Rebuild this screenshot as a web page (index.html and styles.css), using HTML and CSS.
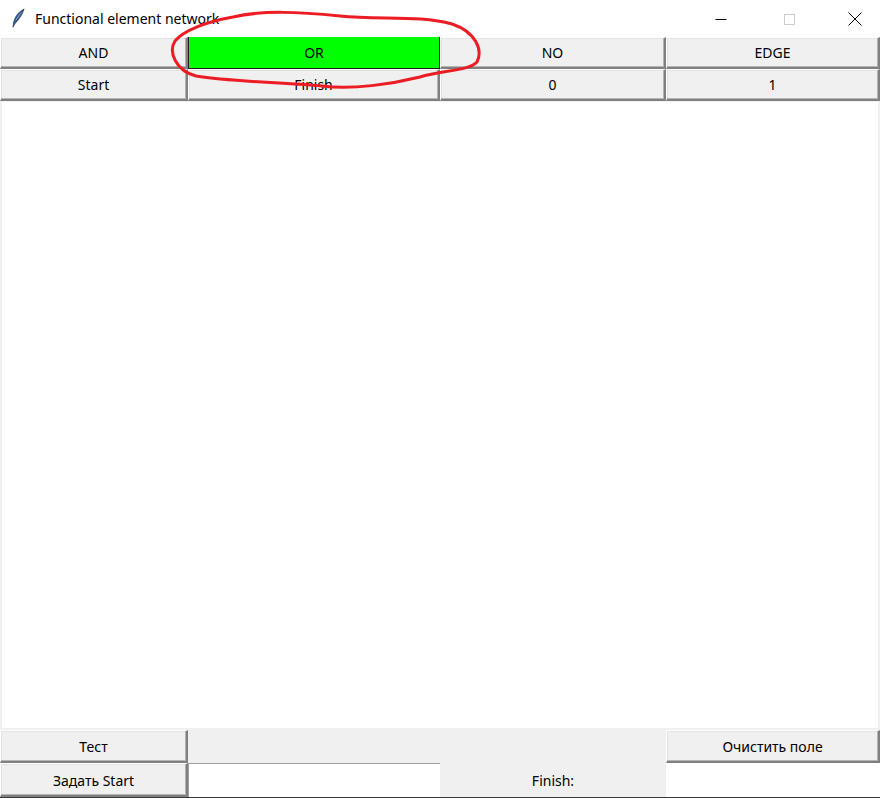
FILE: index.html
```html
<!DOCTYPE html>
<html lang="ru">
<head>
<meta charset="utf-8">
<title>Functional element network</title>
<link rel="stylesheet" href="styles.css">
</head>
<body>
<div class="window">
  <div class="titlebar">
    <div class="title-left">
      <svg class="app-icon" width="16" height="20" viewBox="0 0 16 20">
        <path d="M14.5 0.5 C 9 3, 5 8, 3.5 13 C 3 15, 2.8 17, 2.6 19.5 L 3.4 19.5 C 3.8 17.5, 4.5 16, 5.5 15 C 9 12, 13 7, 14.5 0.5 Z" fill="#3a5a8c"/>
        <path d="M13.5 2 C 10 5, 7 9, 5.2 13.5 C 8 11, 11.5 7, 13.5 2 Z" fill="#8fb0dd"/>
        <path d="M14 1 L 3 19" stroke="#1d2b44" stroke-width="0.7" fill="none"/>
      </svg>
      <span class="title-text">Functional element network</span>
    </div>
    <div class="title-controls">
      <span class="ctl ctl-min"><svg width="12" height="12" viewBox="0 0 12 12"><path d="M0.5 6.5 H 11.5" stroke="#000" stroke-width="1"/></svg></span>
      <span class="ctl ctl-max"><svg width="12" height="12" viewBox="0 0 12 12"><rect x="1.5" y="1.5" width="10" height="10" fill="none" stroke="#cccccc" stroke-width="1"/></svg></span>
      <span class="ctl ctl-close"><svg width="14" height="14" viewBox="0 0 14 14"><path d="M0.5 0.5 L 13.5 13.5 M13.5 0.5 L 0.5 13.5" stroke="#000" stroke-width="1"/></svg></span>
    </div>
  </div>

  <div class="toolbar">
    <div class="btn">AND</div>
    <div class="btn btn-active">OR</div>
    <div class="btn">NO</div>
    <div class="btn">EDGE</div>
    <div class="btn">Start</div>
    <div class="btn">Finish</div>
    <div class="btn">0</div>
    <div class="btn">1</div>
  </div>

  <div class="canvas"></div>

  <div class="bottom">
    <div class="btn">Тест</div>
    <div class="filler"></div>
    <div class="btn btn-wide">Очистить поле</div>
    <div class="btn">Задать Start</div>
    <div class="entry entry-left"></div>
    <div class="label">Finish:</div>
    <div class="entry entry-right"></div>
  </div>
  <div class="bottom-edge"></div>

  <svg class="annotation" width="880" height="100" viewBox="0 0 880 100">
    <path d="M 233 17 C 262 10, 300 12, 340 16 C 380 20, 420 15, 452 24 C 476 32, 483 50, 477 62 C 469 71, 442 70, 420 77 C 392 84, 352 90, 322 86 C 282 82, 232 82, 196 76 C 176 71, 168 52, 175 41 C 183 31, 205 22, 233 17 Z" fill="none" stroke="#ec1c24" stroke-width="3" stroke-linejoin="round" stroke-linecap="round"/>
  </svg>
</div>
</body>
</html>
```

FILE: styles.css
```css
* { box-sizing: border-box; }
html, body {
  margin: 0;
  padding: 0;
  background: #ffffff;
}
body {
  font-family: "Noto Sans", "Open Sans", "Liberation Sans", sans-serif;
  font-size: 14px;
  color: #000;
}
.window {
  position: relative;
  width: 880px;
  height: 798px;
  background: #f0f0f0;
  overflow: hidden;
}
.titlebar {
  height: 37px;
  background: #ffffff;
  display: flex;
  align-items: center;
  justify-content: space-between;
}
.title-left {
  display: flex;
  align-items: center;
  padding-left: 10px;
  gap: 9px;
}
.app-icon { display: block; margin-top: -1px; }
.title-text {
  font-size: 14px;
  color: #000;
  margin-top: -1px;
}
.title-controls {
  display: flex;
  height: 100%;
}
.ctl {
  width: 58px;
  height: 100%;
  display: flex;
  align-items: center;
  justify-content: center;
}
.ctl-min { width: 46px; margin-right: 22px; }
.ctl-max { width: 46px; margin-right: 10px; }
.ctl-close { width: 58px; }
.ctl svg { display: block; }
.ctl-min svg { margin-top: 1px; }
.ctl-close svg { margin-left: 8px; }

.toolbar {
  display: grid;
  grid-template-columns: 188px 252px 226px 214px;
  grid-template-rows: 32px 32px;
}
.btn {
  background: #f0f0f0;
  display: flex;
  align-items: center;
  justify-content: center;
  border-style: solid;
  border-width: 1px 2px 2px 1px;
  border-color: #ffffff #808080 #808080 #ffffff;
  box-shadow: inset -1px -1px 0 #b4b4b4, inset 1px 1px 0 #e3e3e3;
  white-space: nowrap;
}
.bottom .btn { padding-top: 1px; }
.btn-active {
  background: #00ff00;
  border-width: 0 1px 1px 1px;
  border-color: #00ff00 #1e1e1e #1e1e1e #1e1e1e;
  box-shadow: none;
}
.canvas {
  height: 629px;
  background: #ffffff;
  border: 2px solid #f0f0f0;
  border-top-width: 1px;
}
.bottom {
  display: grid;
  grid-template-columns: 188px 252px 226px 214px;
  grid-template-rows: 33px 34px;
}
.filler {
  grid-column: 2 / 4;
  background: #f0f0f0;
}
.btn-wide { grid-column: 4; }
.entry {
  background: #ffffff;
}
.entry-left {
  border-top: 1px solid #a0a0a0;
  border-left: 1px solid #a0a0a0;
}
.label {
  display: flex;
  align-items: center;
  justify-content: center;
  padding-top: 1px;
  background: #f0f0f0;
}
.bottom-edge {
  height: 1px;
  background: #3a3a3a;
}
.annotation {
  position: absolute;
  left: 0;
  top: 0;
  pointer-events: none;
}
```
